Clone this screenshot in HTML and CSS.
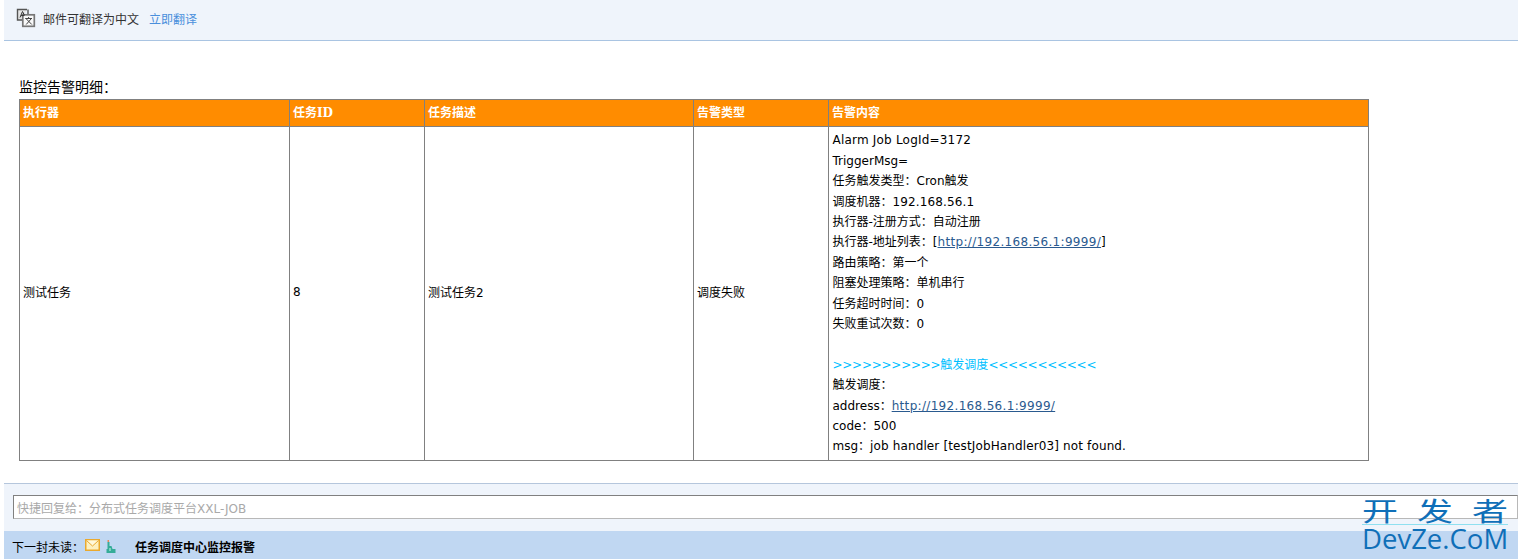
FILE: index.html
```html
<!DOCTYPE html>
<html lang="zh">
<head>
<meta charset="utf-8">
<title>任务调度中心监控报警</title>
<link rel="stylesheet" href="styles.css">
</head>
<body>
<div class="page">
  <header class="translate-bar">
    <svg class="translate-icon" width="20" height="20" viewBox="0 0 20 20">
      <path d="M11 1.5 H1.5 V12 H6" fill="#e6e6e6" stroke="#555" stroke-width="1.4"/>
      <path d="M12 1.5 V7" fill="none" stroke="#555" stroke-width="1.4"/>
      <rect x="6.8" y="6.8" width="11.5" height="11.5" fill="#f8f8f8" stroke="#777" stroke-width="1.7"/>
      <path d="M4 9.5 L6.5 3.5 L8.5 7.5 M5 7.6 H8" fill="none" stroke="#333"/>
      <path d="M9.2 10.5 H16 M12.6 9 V10.5 M10.2 16.5 L15 11 M10.4 11 L15.8 16.5" fill="none" stroke="#444"/>
    </svg>
    <span class="translate-text">邮件可翻译为中文</span>
    <a class="translate-link" href="#">立即翻译</a>
  </header>
  <main class="mail-body">
    <div class="mail-title">监控告警明细：</div>
    <table class="alarm">
      <colgroup>
        <col class="c1"><col class="c2"><col class="c3"><col class="c4"><col class="c5">
      </colgroup>
      <thead>
        <tr><th>执行器</th><th>任务ID</th><th>任务描述</th><th>告警类型</th><th>告警内容</th></tr>
      </thead>
      <tbody>
        <tr>
          <td class="cjk">测试任务</td>
          <td class="num">8</td>
          <td class="cjk">测试任务2</td>
          <td class="cjk">调度失败</td>
          <td class="content"><span class="wide">Alarm Job LogId=3172</span><br>TriggerMsg=<br>任务触发类型：Cron触发<br>调度机器：<span class="ip">192.168.56.1</span><br>执行器-注册方式：自动注册<br>执行器-地址列表：[<a class="url" href="#">http://192.168.56.1:9999/</a>]<br>路由策略：第一个<br>阻塞处理策略：单机串行<br>任务超时时间：0<br>失败重试次数：0<br><br><span class="cyan"><span class="chev">&gt;&gt;&gt;&gt;&gt;&gt;&gt;&gt;&gt;&gt;&gt;</span>触发调度<span class="chev">&lt;&lt;&lt;&lt;&lt;&lt;&lt;&lt;&lt;&lt;&lt;</span></span><br>触发调度：<br>address：<a class="url" href="#">http://192.168.56.1:9999/</a><br>code：500<br>msg：<span class="ip">job handler [testJobHandler03] not found.</span></td>
        </tr>
      </tbody>
    </table>
  </main>
  <section class="reply-bar">
    <div class="reply-input">快捷回复给：分布式任务调度平台XXL-JOB</div>
  </section>
  <footer class="next-bar">
    <span class="next-label">下一封未读：</span>
    <svg class="env" width="15" height="12" viewBox="0 0 15 12">
      <rect x="0.75" y="0.75" width="13.5" height="10.5" fill="#fdf0c0" stroke="#eaa92e" stroke-width="1.5"/>
      <path d="M1.5 1.5 L7.5 7 L13.5 1.5" fill="#fff8dc" stroke="#eaa92e"/>
    </svg>
    <svg class="statue" width="10" height="13" viewBox="0 0 10 13">
      <rect x="1.5" y="0" width="1.5" height="2" fill="#e8875a"/>
      <path d="M1.5 2 H3.5 V6 H5.5 L6.5 9 H9.5 V13 H0.5 V9 H1.5 Z" fill="#35ac98"/>
      <path d="M3 8 H5 V11 H3 Z" fill="#7fd0c0"/>
    </svg>
    <span class="next-subject">任务调度中心监控报警</span>
  </footer>
</div>
<div class="watermark">
  <div class="wm-cn"><span>开</span><span>发</span><span>者</span></div>
  <div class="wm-en">DevZe.CoM</div>
</div>
</body>
</html>
```
FILE: styles.css
```css
html, body { margin: 0; padding: 0; background: #fff; height: 559px; overflow: hidden; }
body { font-family: "DejaVu Sans", "Noto Sans CJK SC", sans-serif; font-size: 12px; color: #000; position: relative; }
.page { display: flex; flex-direction: column; height: 559px; padding-left: 4px; box-sizing: border-box; }

.translate-bar { height: 41px; box-sizing: border-box; background: #eff4fb; border-bottom: 1px solid #a9c4e2; display: flex; align-items: center; padding: 0 0 4px 12px; flex: none; }
.translate-icon { flex: none; margin-right: 7px; }
.translate-text { font-family: "Noto Sans CJK SC", sans-serif; font-size: 12px; color: #333; margin-right: 10px; }
.translate-link { font-family: "Noto Sans CJK SC", sans-serif; font-size: 12px; color: #4a8fdc; text-decoration: none; }

.mail-body { flex: 1; padding: 34px 0 0 15px; }
.mail-title { font-family: "Noto Sans CJK SC", sans-serif; font-size: 14px; line-height: 22px; height: 24px; }
.alarm { border-collapse: collapse; table-layout: fixed; width: 1349px; font-family: "DejaVu Sans", "Noto Sans CJK SC", sans-serif; }
.c1 { width: 270px; } .c2 { width: 135px; } .c3 { width: 269px; } .c4 { width: 135px; } .c5 { width: 540px; }
.alarm th, .alarm td { border: 1px solid #808080; padding: 3px; text-align: left; font-size: 12px; }
.alarm th { background: #ff8c00; color: #fff; height: 20px; padding-top: 1px; padding-bottom: 5px; font-family: "DejaVu Serif", "Noto Sans CJK SC", serif; font-size: 12px; font-weight: bold; }
.alarm td.cjk { padding-bottom: 6px; }
.alarm td.num { padding-bottom: 5px; }
.alarm td.content { line-height: 20.4px; padding-left: 3.5px; padding-top: 3.3px; }
.alarm a { color: #2a5a8f; }
.wide { letter-spacing: 0.2px; }
.ip { letter-spacing: 0.13px; }
.url { letter-spacing: 0.32px; }
.chev { letter-spacing: -0.25px; }
.cyan { color: #00bfff; }

.reply-bar { height: 48px; flex: none; background: #eff4fb; border-top: 1px solid #b5c6dc; box-sizing: border-box; padding: 11px 0 0 9px; }
.reply-input { height: 24px; box-sizing: border-box; background: #fff; border: 1px solid #b8b8b8; border-top-color: #808080; border-left-color: #808080; line-height: 20px; padding: 3px 0 0 3px; color: #a9a9a9; font-family: "DejaVu Sans", "Noto Sans CJK SC", sans-serif; font-size: 12px; }

.next-bar { height: 28px; box-sizing: border-box; flex: none; background: #c0d7f2; display: flex; align-items: center; padding: 2px 0 0 8px; font-family: "Noto Sans CJK SC", sans-serif; font-size: 12px; }
.next-label { margin-right: 1px; }
.env { margin-right: 6px; margin-bottom: 3px; }
.statue { margin-right: 19px; }
.next-subject { font-weight: bold; }

.watermark { position: absolute; left: 1362px; top: 494px; width: 146px; color: #0f6fb8; font-family: "Noto Sans CJK SC", sans-serif; }
.wm-cn { display: flex; justify-content: space-between; font-size: 36px; line-height: 30px; height: 30px; font-weight: 400; border-bottom: 1px solid #8fe0f0; }
.wm-cn span { display: block; transform: scaleY(0.72); }
.wm-en { font-family: "Open Sans", sans-serif; font-size: 27.5px; line-height: 27px; white-space: nowrap; }
```
